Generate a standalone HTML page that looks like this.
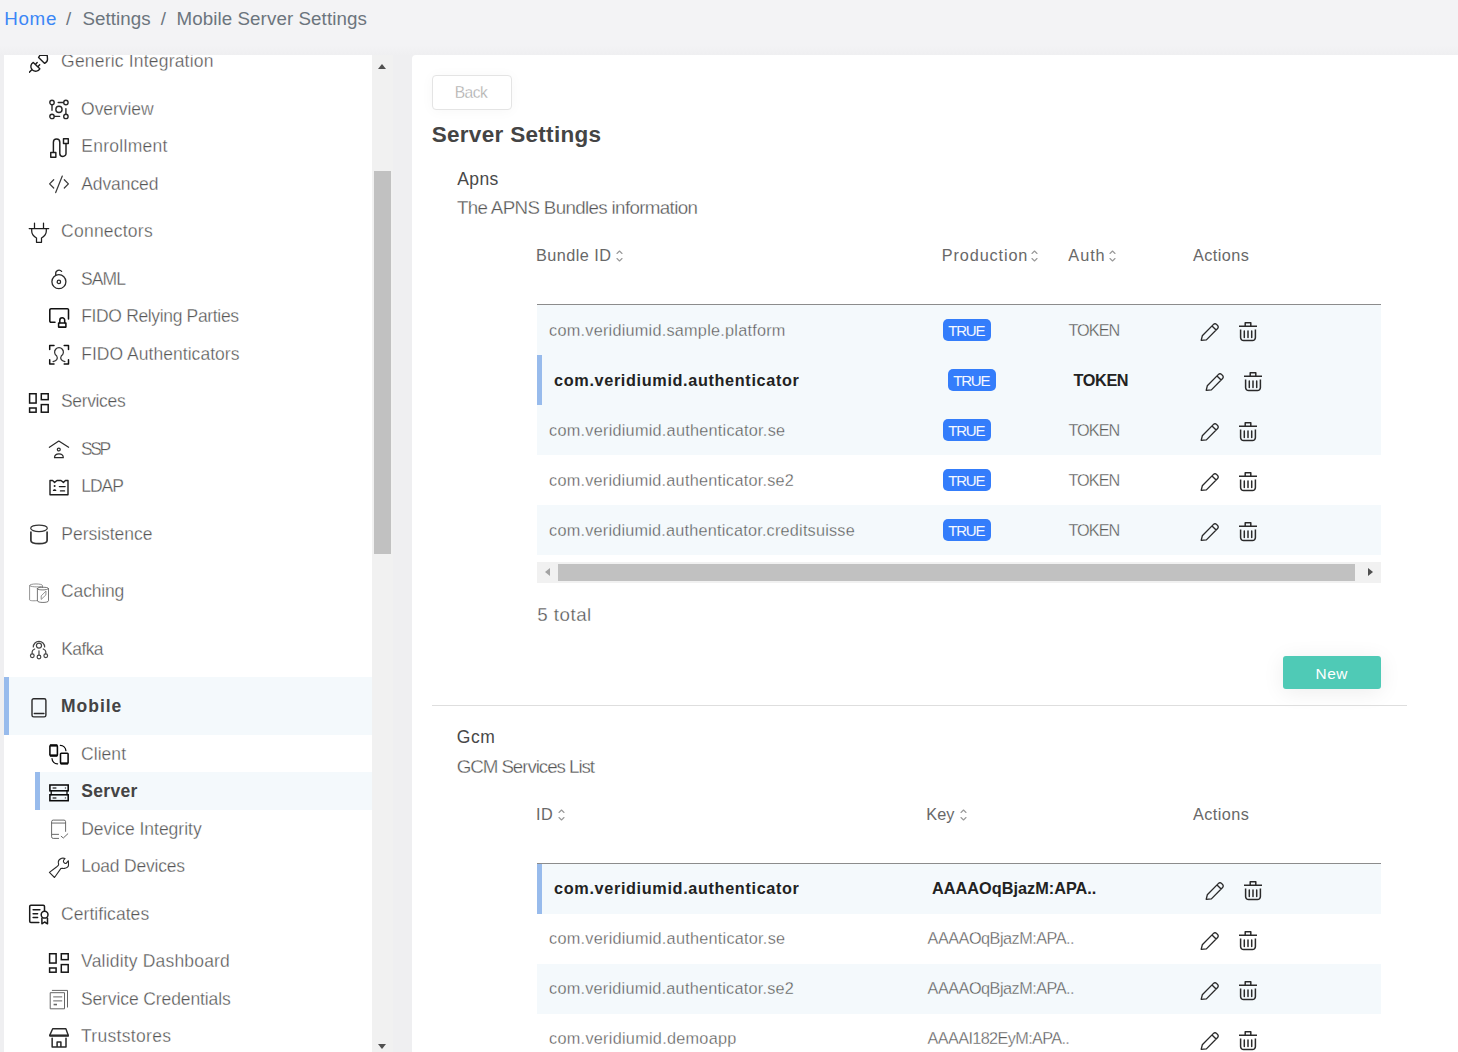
<!DOCTYPE html>
<html lang="en"><head><meta charset="utf-8"><title>Mobile Server Settings</title>
<style>
html,body{margin:0;padding:0}
body{position:relative;width:1458px;height:1052px;overflow:hidden;background:#f3f3f5;
 font-family:"Liberation Sans",sans-serif;font-kerning:normal;color:#555}
nav,aside,main,section,header{display:block;margin:0;padding:0}
.a{position:absolute}
.t{position:absolute;white-space:pre;line-height:1;margin:0;padding:0;font-weight:400;text-decoration:none;display:block}
.b{font-weight:700}
.l{-webkit-text-stroke:0.3px #fff}
.lh{-webkit-text-stroke-color:#f4f9fc}
.ic{position:absolute;overflow:visible}
#shade{left:0;top:46px;width:1458px;height:1006px;background:linear-gradient(#f3f3f5,#efeff1 9px)}
#side{left:4px;top:55px;width:368px;height:997px;background:#fff}
#vtrack{left:372px;top:55px;width:21px;height:997px;background:#f1f1f1}
#vthumb{left:374px;top:171px;width:17px;height:383px;background:#c1c1c1}
#panel{left:412px;top:55px;width:1046px;height:997px;background:#fff;border-top-left-radius:4px}
.hl{background:#f4f9fc}
.bar{background:#98bbec}
.row{left:537px;width:844px;height:50px}
.hline{left:537px;width:844px;height:1px;background:#8c8c8c}
.bdgbox{width:48px;height:22px;border-radius:5px;background:#347dfb}
#back{left:432px;top:75px;width:78px;height:33px;border:1px solid #e4e4e4;border-radius:4px;background:#fff;box-shadow:0 1px 14px rgba(0,0,0,.035)}
#new{left:1283px;top:656px;width:98px;height:33px;border-radius:3px;background:#4fcab6;box-shadow:0 3px 22px rgba(0,0,0,.075)}
#hr{left:432px;top:705px;width:975px;height:1px;background:#dedede}
#htrack{left:537px;top:562px;width:844px;height:21px;background:#f1f1f1}
#hthumb{left:558px;top:564px;width:797px;height:17px;background:#c1c1c1}
.tri{width:0;height:0;border-style:solid}
</style></head><body>
<div id="shade" class="a"></div><div id="side" class="a"></div><div id="vtrack" class="a"></div><div id="vthumb" class="a"></div>
<div class="a tri" style="left:378px;top:64px;border-width:0 4.75px 5px 4.75px;border-color:transparent transparent #505050 transparent"></div><div class="a tri" style="left:378px;top:1044px;border-width:5px 4.75px 0 4.75px;border-color:#505050 transparent transparent transparent"></div>
<div id="panel" class="a"></div>
<nav aria-label="breadcrumb">
<a class="t" style="left:4.16px;top:10.3px;font-size:18.75px;letter-spacing:0.719px;color:#3b86f6">Home</a>
<span class="t" style="left:66px;top:10.3px;font-size:18.75px;letter-spacing:0.000px;color:#6c757d">/</span>
<span class="t" style="left:82.55px;top:10.3px;font-size:18.75px;letter-spacing:0.040px;color:#6c757d">Settings</span>
<span class="t" style="left:160.8px;top:10.3px;font-size:18.75px;letter-spacing:0.000px;color:#6c757d">/</span>
<span class="t" style="left:176.46px;top:10.3px;font-size:18.75px;letter-spacing:0.085px;color:#6c757d">Mobile Server Settings</span>
</nav>
<aside>
<div class="a hl" style="left:4px;top:677px;width:368px;height:57.5px"></div><div class="a bar" style="left:4px;top:677px;width:5px;height:57.5px"></div><div class="a hl" style="left:35px;top:772px;width:337px;height:37.5px"></div><div class="a bar" style="left:35px;top:772px;width:5px;height:37.5px"></div>
<svg class="ic" style="clip-path:inset(2px 0 0 0);left:29px;top:53px" width="20" height="20" viewBox="0 0 20 20" fill="none" stroke="#1e1e1e" stroke-width="1.4" stroke-linecap="round" stroke-linejoin="round"><path d="M-0.1 19.7 L2.8 16.8"/><path d="M4.3 9.4 L10.8 15.8 C9.4 18.4 6 19 3.4 17 C0.8 14.6 1.6 11 4.3 9.4 Z"/><path d="M6.8 11.1 L8.2 9.6 M9.3 13.2 L10.7 11.7"/><path d="M9.6 4.4 L15.7 10.4 C17.6 9.4 18.6 8 18.5 6 L18.2 2.2 H11 Z"/></svg><a class="t l" style="clip-path:inset(2px 0 0 0);left:61.12px;top:53px;font-size:17.5px;letter-spacing:0.193px;color:#555">Generic Integration</a>
<svg class="ic" style="left:49px;top:100px" width="20" height="20" viewBox="0 0 20 20" fill="none" stroke="#2a2a2a" stroke-width="1.4" stroke-linecap="round" stroke-linejoin="round"><circle cx="3" cy="2.5" r="2.2"/><circle cx="16.9" cy="2.5" r="2.2"/><circle cx="3" cy="16.4" r="2.2"/><circle cx="16.9" cy="16.4" r="2.2"/><circle cx="9.95" cy="9.4" r="3.1"/><path d="M3 5 V10.2 M14.4 2.5 H9.2 M5.5 16.4 H10.6 M16.9 13.9 V8.6"/></svg><a class="t l" style="left:81.07px;top:100.5px;font-size:17.5px;letter-spacing:-0.049px;color:#555">Overview</a>
<svg class="ic" style="left:49px;top:138px" width="20" height="20" viewBox="0 0 20 20" fill="none" stroke="#1e1e1e" stroke-width="1.45" stroke-linecap="round" stroke-linejoin="round"><rect x="1.75" y="14.5" width="5.1" height="4.7"/><rect x="14.5" y="0.7" width="4.8" height="4.7"/><path d="M4.4 14.2 V4.2 a3.2 3.2 0 0 1 6.4 0 V15.4 a3.1 3.1 0 0 0 6.2 0 V6"/></svg><a class="t l" style="left:81.21px;top:138px;font-size:17.5px;letter-spacing:0.285px;color:#555">Enrollment</a>
<svg class="ic" style="left:49px;top:175px" width="20" height="20" viewBox="0 0 20 20" fill="none" stroke="#3a3a3a" stroke-width="1.25" stroke-linecap="round" stroke-linejoin="round"><path d="M4.7 4.7 L0.6 8.85 L4.7 13 M13.3 1.1 L6.7 17.6 M15.3 4.7 L19.4 8.85 L15.3 13"/></svg><a class="t l" style="left:81.17px;top:175.5px;font-size:17.5px;letter-spacing:-0.068px;color:#555">Advanced</a>
<svg class="ic" style="left:29px;top:223px" width="20" height="20" viewBox="0 0 20 20" fill="none" stroke="#1e1e1e" stroke-width="1.25" stroke-linecap="round" stroke-linejoin="round"><path d="M0.2 5.5 H19.7 M5.5 0 V5.5 M14.5 0 V5.5"/><path d="M2.7 5.6 V8 C2.7 11.8 5 13.6 7.5 15 V19.3 H12.5 V15 C15 13.6 17.3 11.8 17.3 8 V5.6"/></svg><a class="t l" style="left:61.11px;top:223px;font-size:17.5px;letter-spacing:0.226px;color:#555">Connectors</a>
<svg class="ic" style="left:49px;top:270px" width="20" height="20" viewBox="0 0 20 20" fill="none" stroke="#2a2a2a" stroke-width="1.3" stroke-linecap="round" stroke-linejoin="round"><circle cx="9.9" cy="11.7" r="7"/><circle cx="9.9" cy="11.9" r="1.7"/><path d="M6.7 5.4 V3.6 a3.3 3.3 0 0 1 5.9 -2.2"/></svg><a class="t l" style="left:80.91px;top:270.5px;font-size:17.5px;letter-spacing:-0.893px;color:#555">SAML</a>
<svg class="ic" style="left:49px;top:308px" width="20" height="20" viewBox="0 0 20 20" fill="none" stroke="#111" stroke-width="1.55" stroke-linecap="round" stroke-linejoin="round"><path d="M6 14.3 H2 a1.2 1.2 0 0 1 -1.2 -1.2 V1.9 a1.2 1.2 0 0 1 1.2 -1.2 H18.3 a1.2 1.2 0 0 1 1.2 1.2 V11"/><rect x="9.6" y="15" width="7.3" height="4.1"/><path d="M10.8 14.8 V12.2 a2.45 2.45 0 0 1 4.9 0 V14.8"/></svg><a class="t l" style="left:81.21px;top:308px;font-size:17.5px;letter-spacing:-0.344px;color:#555">FIDO Relying Parties</a>
<svg class="ic" style="left:49px;top:345px" width="20" height="20" viewBox="0 0 20 20" fill="none" stroke="#333" stroke-width="1.25" stroke-linecap="round" stroke-linejoin="round"><path d="M5 0.4 H0.7 V4.5 M15.2 0.4 H19.5 V4.5 M0.7 14.7 V18.9 H5 M19.5 14.7 V18.9 H15.2" stroke="#111" stroke-width="1.5"/><path d="M4.1 16.6 C7.2 15.6 9.6 14.2 7.6 10.8 A4.4 4.4 0 1 1 12.4 10.8 C10.4 14.2 12.8 15.6 15.9 16.6"/></svg><a class="t l" style="left:81.21px;top:345.5px;font-size:17.5px;letter-spacing:0.038px;color:#555">FIDO Authenticators</a>
<svg class="ic" style="left:29px;top:393px" width="20" height="20" viewBox="0 0 20 20" fill="none" stroke="#151515" stroke-width="1.5" stroke-linecap="round" stroke-linejoin="round"><g stroke-linejoin="miter"><rect x="0.6" y="0.75" width="6.5" height="9.3"/><rect x="12.3" y="0.75" width="6.9" height="5.9"/><rect x="0.6" y="15" width="6.5" height="4.2"/><rect x="12.3" y="11.6" width="6.9" height="7.6"/></g></svg><a class="t l" style="left:61.01px;top:393px;font-size:17.5px;letter-spacing:-0.354px;color:#555">Services</a>
<svg class="ic" style="left:49px;top:440px" width="20" height="20" viewBox="0 0 20 20" fill="none" stroke="#2a2a2a" stroke-width="1.2" stroke-linecap="round" stroke-linejoin="round"><path d="M0.4 7.3 L9.8 1 L19.6 7.3"/><circle cx="9.8" cy="9.5" r="1.45"/><path d="M5.5 17.7 H14.3 C14.3 15 12 13.8 9.9 13.8 C7.8 13.8 5.5 15 5.5 17.7 Z"/></svg><a class="t l" style="left:80.91px;top:440.5px;font-size:17.5px;letter-spacing:-2.400px;color:#555">SSP</a>
<svg class="ic" style="left:49px;top:478px" width="20" height="20" viewBox="0 0 20 20" fill="none" stroke="#1e1e1e" stroke-width="1.4" stroke-linecap="round" stroke-linejoin="round"><path d="M1 2.5 H3.6 L5.6 4.4 L8 2.5 H12 L14.4 4.4 L16.4 2.5 H19 V16.8 H1 Z"/><path d="M10.4 8.6 H16.1 M11.5 12.9 H15.5"/><circle cx="5.6" cy="8" r="1" fill="#1e1e1e" stroke="none"/><path d="M3.8 13 C3.8 10.8 7.4 10.8 7.4 13 Z" fill="#1e1e1e" stroke="none"/></svg><a class="t l" style="left:81.21px;top:478px;font-size:17.5px;letter-spacing:-1.036px;color:#555">LDAP</a>
<svg class="ic" style="left:29px;top:525px" width="20" height="20" viewBox="0 0 20 20" fill="none" stroke="#333" stroke-width="1.4" stroke-linecap="round" stroke-linejoin="round"><ellipse cx="10" cy="3.25" rx="8.3" ry="3.25" stroke-width="1.25"/><path d="M1.9 7 V15.5 C1.9 17.4 5.5 18.7 10 18.7 C14.5 18.7 18.1 17.4 18.1 15.5 V7" stroke-width="1.7"/></svg><a class="t l" style="left:61.31px;top:525.5px;font-size:17.5px;letter-spacing:-0.027px;color:#555">Persistence</a>
<svg class="ic" style="left:29px;top:583px" width="20" height="20" viewBox="0 0 20 20" fill="none" stroke="#777" stroke-width="0.8" stroke-linecap="round" stroke-linejoin="round"><path d="M8.4 17.6 C6 17.9 0.6 18 0.6 16.8 V2.6 C0.6 0.4 13.5 0.4 13.5 2.6 V4.4"/><path d="M0.6 2.6 C0.6 4 9 4.2 12.2 3.6"/><path d="M8.4 5.6 V17.8 C8.4 20 19.5 20 19.5 17.8 V5.6 C19.5 3.8 8.4 3.8 8.4 5.6 C8.4 7.4 19.5 7.4 19.5 5.6" stroke="#555"/><path d="M16.7 8.4 L12.2 12.9 L12.2 16.4 L16.6 12.2 Z"/></svg><a class="t l" style="left:61.11px;top:583px;font-size:17.5px;letter-spacing:-0.165px;color:#555">Caching</a>
<svg class="ic" style="left:29px;top:640px" width="20" height="20" viewBox="0 0 20 20" fill="none" stroke="#444" stroke-width="1.2" stroke-linecap="round" stroke-linejoin="round"><path d="M4.3 7 A5.65 5.65 0 1 1 15.65 7"/><circle cx="9.97" cy="5.6" r="2.55"/><circle cx="3.3" cy="15.75" r="1.85"/><circle cx="9.97" cy="17" r="1.85"/><circle cx="16.75" cy="15.75" r="1.85"/><path d="M5.7 9 C4 9.8 3.15 10.6 3.15 11.8 V13.6 M14.25 9 C15.9 9.8 16.8 10.6 16.8 11.8 V13.6 M9.97 10.8 V14.8"/></svg><a class="t l" style="left:61.31px;top:640.5px;font-size:17.5px;letter-spacing:-0.641px;color:#555">Kafka</a>
<svg class="ic" style="left:29px;top:698px" width="20" height="20" viewBox="0 0 20 20" fill="none" stroke="#2a2a2a" stroke-width="1.4" stroke-linecap="round" stroke-linejoin="round"><rect x="3" y="0.8" width="13.9" height="18.1" rx="1.7"/><path d="M5.3 15.45 H14.9"/></svg><a class="t b" style="left:61.03px;top:698px;font-size:17.5px;letter-spacing:0.971px;color:#444">Mobile</a>
<svg class="ic" style="left:49px;top:745px" width="20" height="20" viewBox="0 0 20 20" fill="none" stroke="#0a0a0a" stroke-width="1.55" stroke-linecap="round" stroke-linejoin="round"><rect x="0.9" y="0.6" width="7.5" height="9.9" rx="0.8"/><path d="M0.9 0.3 H8.4 M0.9 10.6 H8.4" stroke-width="2.1" stroke-linecap="butt"/><rect x="11.5" y="8.2" width="7.6" height="10.2" rx="0.8"/><path d="M11.5 18.5 H19.1" stroke-width="2.1" stroke-linecap="butt"/><path d="M11.3 0.3 A5.6 5.6 0 0 1 16.9 5.6 M3 13.6 A5.3 5.3 0 0 0 8.6 18.8" stroke-width="1.2"/></svg><a class="t l" style="left:81.01px;top:745.5px;font-size:17.5px;letter-spacing:0.055px;color:#555">Client</a>
<svg class="ic" style="left:49px;top:783px" width="20" height="20" viewBox="0 0 20 20" fill="none" stroke="#0a0a0a" stroke-width="1.55" stroke-linecap="round" stroke-linejoin="round"><g stroke-linejoin="miter"><rect x="0.9" y="2" width="18.3" height="5.8"/><rect x="0.9" y="11.8" width="18.3" height="5.9"/></g><path d="M2.2 8 V11.6 M18 8 V11.6" stroke-width="1.3"/><path d="M3.6 5 H7.4 M3.6 14.9 H7.4" stroke="#444" stroke-width="1.5" stroke-linecap="butt"/><circle cx="16.4" cy="5" r="0.7" fill="#444" stroke="none"/><circle cx="16.4" cy="14.9" r="0.7" fill="#444" stroke="none"/></svg><a class="t b" style="left:81.3px;top:783px;font-size:17.5px;letter-spacing:0.296px;color:#444">Server</a>
<svg class="ic" style="left:49px;top:820px" width="20" height="20" viewBox="0 0 20 20" fill="none" stroke="#6a6a6a" stroke-width="1.0" stroke-linecap="round" stroke-linejoin="round"><path d="M9.6 18.4 H4.2 a1.6 1.6 0 0 1 -1.6 -1.6 V1.7 a1.6 1.6 0 0 1 1.6 -1.6 H15 a1.6 1.6 0 0 1 1.6 1.6 V11.4"/><path d="M2.6 3.05 H16.6 M3.2 14.35 H9.6"/><path d="M12.2 16.3 L14.3 18 L18.8 13.8"/></svg><a class="t l" style="left:81.21px;top:820.5px;font-size:17.5px;letter-spacing:-0.012px;color:#555">Device Integrity</a>
<svg class="ic" style="left:49px;top:858px" width="20" height="20" viewBox="0 0 20 20" fill="none" stroke="#2a2a2a" stroke-width="1.1" stroke-linecap="round" stroke-linejoin="round"><path d="M0.4 14.4 L5.5 19.5 L11.8 10.6 C13 10 14 10.7 15.5 10.4 C17.5 10 19.5 8.5 19.5 7 L19.4 2.7 L17.2 5.3 C16.5 5.8 15 5.3 14.4 3.6 C14.2 2.8 15 1.5 16 0.6 C15 0.1 13.5 0.1 12.7 0.3 C10.8 1 9.3 2.8 9.3 4.1 C9.2 5.3 10 6.2 9.5 7 C9 8 8.2 8.5 7.5 9 Z"/></svg><a class="t l" style="left:81.21px;top:858px;font-size:17.5px;letter-spacing:-0.201px;color:#555">Load Devices</a>
<svg class="ic" style="left:29px;top:905px" width="20" height="20" viewBox="0 0 20 20" fill="none" stroke="#1a1a1a" stroke-width="1.5" stroke-linecap="round" stroke-linejoin="round"><path d="M9.8 17.5 H1.9 a1.2 1.2 0 0 1 -1.2 -1.2 V1.4 a1.2 1.2 0 0 1 1.2 -1.2 H14.3 a1.2 1.2 0 0 1 1.2 1.2 V5.9"/><path d="M4.1 4.8 H10.9 M4.1 8.8 H8.6 M4.1 12.6 H8.6"/><circle cx="15.6" cy="9.7" r="3.4"/><path d="M12.9 13.3 V18.8 L15.6 17 L18.5 18.8 V13.3"/></svg><a class="t l" style="left:61.11px;top:905.5px;font-size:17.5px;letter-spacing:0.045px;color:#555">Certificates</a>
<svg class="ic" style="left:49px;top:953px" width="20" height="20" viewBox="0 0 20 20" fill="none" stroke="#151515" stroke-width="1.5" stroke-linecap="round" stroke-linejoin="round"><g stroke-linejoin="miter"><rect x="0.6" y="0.75" width="6.5" height="9.3"/><rect x="12.3" y="0.75" width="6.9" height="5.9"/><rect x="0.6" y="15" width="6.5" height="4.2"/><rect x="12.3" y="11.6" width="6.9" height="7.6"/></g></svg><a class="t l" style="left:81.12px;top:953px;font-size:17.5px;letter-spacing:0.183px;color:#555">Validity Dashboard</a>
<svg class="ic" style="left:49px;top:990px" width="20" height="20" viewBox="0 0 20 20" fill="none" stroke="#666" stroke-width="1.0" stroke-linecap="round" stroke-linejoin="round"><rect x="1.6" y="2.7" width="13.9" height="16.1"/><path d="M3.3 0.4 H18.5 V17.1"/><path d="M4.6 6.9 H12.8 M4.6 10.9 H12.8"/><path d="M4.6 14.55 H8" stroke-width="1.6" stroke-linecap="butt"/></svg><a class="t l" style="left:80.91px;top:990.5px;font-size:17.5px;letter-spacing:-0.106px;color:#555">Service Credentials</a>
<svg class="ic" style="left:49px;top:1028px" width="20" height="20" viewBox="0 0 20 20" fill="none" stroke="#2a2a2a" stroke-width="1.5" stroke-linecap="round" stroke-linejoin="round"><path d="M3.7 0.7 H16.9 L19.3 7.4 H0.7 Z" stroke-width="1.4"/><path d="M0.4 7.7 H19.8" stroke-width="2.2" stroke-linecap="butt"/><path d="M3.15 10.2 V19 H17 V10.2 M8.1 19 V14.1 H11.9 V19"/></svg><a class="t l" style="left:81.01px;top:1028px;font-size:17.5px;letter-spacing:0.306px;color:#555">Truststores</a>
</aside>
<main>
<div id="back" class="a"></div><div id="new" class="a"></div><div id="hr" class="a"></div>
<div class="a row hl" style="top:305px"></div><div class="a row hl" style="top:355px"></div><div class="a row hl" style="top:405px"></div><div class="a row hl" style="top:505px"></div><div class="a bar" style="left:537px;top:355px;width:5px;height:50px"></div><div class="a hline" style="top:304px"></div>
<div class="a row hl" style="top:864px"></div><div class="a row hl" style="top:964px"></div><div class="a bar" style="left:537px;top:864px;width:5px;height:50px"></div><div class="a hline" style="top:863px"></div>
<div class="a bdgbox" style="left:943px;top:319px"></div><div class="a bdgbox" style="left:948px;top:369px"></div><div class="a bdgbox" style="left:943px;top:419px"></div><div class="a bdgbox" style="left:943px;top:469px"></div><div class="a bdgbox" style="left:943px;top:519px"></div>
<svg class="ic" style="left:1199.5px;top:320.5px" width="20" height="20" viewBox="0 0 20 20" fill="none" stroke="#2a2a2a" stroke-width="1.35" stroke-linejoin="round" stroke-linecap="round"><path d="M2.3 14.8 L13.5 3.4 a2.1 2.1 0 0 1 3 0 L17.6 4.5 a2.1 2.1 0 0 1 0 3 L6.4 18.9 L1.2 19.3 Z M12 4.9 L16.1 9"/></svg><svg class="ic" style="left:1238.2px;top:320.5px" width="20" height="20" viewBox="0 0 20 20" fill="none" stroke="#2a2a2a" stroke-width="1.5" stroke-linecap="butt" stroke-linejoin="round"><path d="M1 5.2 H19 M7.2 5 V1.8 H12.8 V5 M2.6 8.4 V16.6 a3 3 0 0 0 3 3 H14.4 a3 3 0 0 0 3 -3 V8.4"/><path d="M6.3 10 V16.4 M10 10 V16.4 M13.7 10 V16.4" stroke-linecap="round"/></svg><svg class="ic" style="left:1204.5px;top:370.5px" width="20" height="20" viewBox="0 0 20 20" fill="none" stroke="#2a2a2a" stroke-width="1.35" stroke-linejoin="round" stroke-linecap="round"><path d="M2.3 14.8 L13.5 3.4 a2.1 2.1 0 0 1 3 0 L17.6 4.5 a2.1 2.1 0 0 1 0 3 L6.4 18.9 L1.2 19.3 Z M12 4.9 L16.1 9"/></svg><svg class="ic" style="left:1243.2px;top:370.5px" width="20" height="20" viewBox="0 0 20 20" fill="none" stroke="#2a2a2a" stroke-width="1.5" stroke-linecap="butt" stroke-linejoin="round"><path d="M1 5.2 H19 M7.2 5 V1.8 H12.8 V5 M2.6 8.4 V16.6 a3 3 0 0 0 3 3 H14.4 a3 3 0 0 0 3 -3 V8.4"/><path d="M6.3 10 V16.4 M10 10 V16.4 M13.7 10 V16.4" stroke-linecap="round"/></svg><svg class="ic" style="left:1199.5px;top:420.5px" width="20" height="20" viewBox="0 0 20 20" fill="none" stroke="#2a2a2a" stroke-width="1.35" stroke-linejoin="round" stroke-linecap="round"><path d="M2.3 14.8 L13.5 3.4 a2.1 2.1 0 0 1 3 0 L17.6 4.5 a2.1 2.1 0 0 1 0 3 L6.4 18.9 L1.2 19.3 Z M12 4.9 L16.1 9"/></svg><svg class="ic" style="left:1238.2px;top:420.5px" width="20" height="20" viewBox="0 0 20 20" fill="none" stroke="#2a2a2a" stroke-width="1.5" stroke-linecap="butt" stroke-linejoin="round"><path d="M1 5.2 H19 M7.2 5 V1.8 H12.8 V5 M2.6 8.4 V16.6 a3 3 0 0 0 3 3 H14.4 a3 3 0 0 0 3 -3 V8.4"/><path d="M6.3 10 V16.4 M10 10 V16.4 M13.7 10 V16.4" stroke-linecap="round"/></svg><svg class="ic" style="left:1199.5px;top:470.5px" width="20" height="20" viewBox="0 0 20 20" fill="none" stroke="#2a2a2a" stroke-width="1.35" stroke-linejoin="round" stroke-linecap="round"><path d="M2.3 14.8 L13.5 3.4 a2.1 2.1 0 0 1 3 0 L17.6 4.5 a2.1 2.1 0 0 1 0 3 L6.4 18.9 L1.2 19.3 Z M12 4.9 L16.1 9"/></svg><svg class="ic" style="left:1238.2px;top:470.5px" width="20" height="20" viewBox="0 0 20 20" fill="none" stroke="#2a2a2a" stroke-width="1.5" stroke-linecap="butt" stroke-linejoin="round"><path d="M1 5.2 H19 M7.2 5 V1.8 H12.8 V5 M2.6 8.4 V16.6 a3 3 0 0 0 3 3 H14.4 a3 3 0 0 0 3 -3 V8.4"/><path d="M6.3 10 V16.4 M10 10 V16.4 M13.7 10 V16.4" stroke-linecap="round"/></svg><svg class="ic" style="left:1199.5px;top:520.5px" width="20" height="20" viewBox="0 0 20 20" fill="none" stroke="#2a2a2a" stroke-width="1.35" stroke-linejoin="round" stroke-linecap="round"><path d="M2.3 14.8 L13.5 3.4 a2.1 2.1 0 0 1 3 0 L17.6 4.5 a2.1 2.1 0 0 1 0 3 L6.4 18.9 L1.2 19.3 Z M12 4.9 L16.1 9"/></svg><svg class="ic" style="left:1238.2px;top:520.5px" width="20" height="20" viewBox="0 0 20 20" fill="none" stroke="#2a2a2a" stroke-width="1.5" stroke-linecap="butt" stroke-linejoin="round"><path d="M1 5.2 H19 M7.2 5 V1.8 H12.8 V5 M2.6 8.4 V16.6 a3 3 0 0 0 3 3 H14.4 a3 3 0 0 0 3 -3 V8.4"/><path d="M6.3 10 V16.4 M10 10 V16.4 M13.7 10 V16.4" stroke-linecap="round"/></svg>
<svg class="ic" style="left:1204.5px;top:879.5px" width="20" height="20" viewBox="0 0 20 20" fill="none" stroke="#2a2a2a" stroke-width="1.35" stroke-linejoin="round" stroke-linecap="round"><path d="M2.3 14.8 L13.5 3.4 a2.1 2.1 0 0 1 3 0 L17.6 4.5 a2.1 2.1 0 0 1 0 3 L6.4 18.9 L1.2 19.3 Z M12 4.9 L16.1 9"/></svg><svg class="ic" style="left:1243.2px;top:879.5px" width="20" height="20" viewBox="0 0 20 20" fill="none" stroke="#2a2a2a" stroke-width="1.5" stroke-linecap="butt" stroke-linejoin="round"><path d="M1 5.2 H19 M7.2 5 V1.8 H12.8 V5 M2.6 8.4 V16.6 a3 3 0 0 0 3 3 H14.4 a3 3 0 0 0 3 -3 V8.4"/><path d="M6.3 10 V16.4 M10 10 V16.4 M13.7 10 V16.4" stroke-linecap="round"/></svg><svg class="ic" style="left:1199.5px;top:929.5px" width="20" height="20" viewBox="0 0 20 20" fill="none" stroke="#2a2a2a" stroke-width="1.35" stroke-linejoin="round" stroke-linecap="round"><path d="M2.3 14.8 L13.5 3.4 a2.1 2.1 0 0 1 3 0 L17.6 4.5 a2.1 2.1 0 0 1 0 3 L6.4 18.9 L1.2 19.3 Z M12 4.9 L16.1 9"/></svg><svg class="ic" style="left:1238.2px;top:929.5px" width="20" height="20" viewBox="0 0 20 20" fill="none" stroke="#2a2a2a" stroke-width="1.5" stroke-linecap="butt" stroke-linejoin="round"><path d="M1 5.2 H19 M7.2 5 V1.8 H12.8 V5 M2.6 8.4 V16.6 a3 3 0 0 0 3 3 H14.4 a3 3 0 0 0 3 -3 V8.4"/><path d="M6.3 10 V16.4 M10 10 V16.4 M13.7 10 V16.4" stroke-linecap="round"/></svg><svg class="ic" style="left:1199.5px;top:979.5px" width="20" height="20" viewBox="0 0 20 20" fill="none" stroke="#2a2a2a" stroke-width="1.35" stroke-linejoin="round" stroke-linecap="round"><path d="M2.3 14.8 L13.5 3.4 a2.1 2.1 0 0 1 3 0 L17.6 4.5 a2.1 2.1 0 0 1 0 3 L6.4 18.9 L1.2 19.3 Z M12 4.9 L16.1 9"/></svg><svg class="ic" style="left:1238.2px;top:979.5px" width="20" height="20" viewBox="0 0 20 20" fill="none" stroke="#2a2a2a" stroke-width="1.5" stroke-linecap="butt" stroke-linejoin="round"><path d="M1 5.2 H19 M7.2 5 V1.8 H12.8 V5 M2.6 8.4 V16.6 a3 3 0 0 0 3 3 H14.4 a3 3 0 0 0 3 -3 V8.4"/><path d="M6.3 10 V16.4 M10 10 V16.4 M13.7 10 V16.4" stroke-linecap="round"/></svg><svg class="ic" style="left:1199.5px;top:1029.5px" width="20" height="20" viewBox="0 0 20 20" fill="none" stroke="#2a2a2a" stroke-width="1.35" stroke-linejoin="round" stroke-linecap="round"><path d="M2.3 14.8 L13.5 3.4 a2.1 2.1 0 0 1 3 0 L17.6 4.5 a2.1 2.1 0 0 1 0 3 L6.4 18.9 L1.2 19.3 Z M12 4.9 L16.1 9"/></svg><svg class="ic" style="left:1238.2px;top:1029.5px" width="20" height="20" viewBox="0 0 20 20" fill="none" stroke="#2a2a2a" stroke-width="1.5" stroke-linecap="butt" stroke-linejoin="round"><path d="M1 5.2 H19 M7.2 5 V1.8 H12.8 V5 M2.6 8.4 V16.6 a3 3 0 0 0 3 3 H14.4 a3 3 0 0 0 3 -3 V8.4"/><path d="M6.3 10 V16.4 M10 10 V16.4 M13.7 10 V16.4" stroke-linecap="round"/></svg>
<svg class="ic" style="left:615.6px;top:250px" width="8" height="12" viewBox="0 0 8 12" fill="none" stroke="#999" stroke-width="1.1" stroke-linecap="round" stroke-linejoin="round"><path d="M1 3.5 L3.5 1 L6 3.5 M1 8.5 L3.5 11 L6 8.5"/></svg><svg class="ic" style="left:1031.4px;top:250px" width="8" height="12" viewBox="0 0 8 12" fill="none" stroke="#999" stroke-width="1.1" stroke-linecap="round" stroke-linejoin="round"><path d="M1 3.5 L3.5 1 L6 3.5 M1 8.5 L3.5 11 L6 8.5"/></svg><svg class="ic" style="left:1108.6px;top:250px" width="8" height="12" viewBox="0 0 8 12" fill="none" stroke="#999" stroke-width="1.1" stroke-linecap="round" stroke-linejoin="round"><path d="M1 3.5 L3.5 1 L6 3.5 M1 8.5 L3.5 11 L6 8.5"/></svg><svg class="ic" style="left:557.9px;top:809px" width="8" height="12" viewBox="0 0 8 12" fill="none" stroke="#999" stroke-width="1.1" stroke-linecap="round" stroke-linejoin="round"><path d="M1 3.5 L3.5 1 L6 3.5 M1 8.5 L3.5 11 L6 8.5"/></svg><svg class="ic" style="left:959.9px;top:809px" width="8" height="12" viewBox="0 0 8 12" fill="none" stroke="#999" stroke-width="1.1" stroke-linecap="round" stroke-linejoin="round"><path d="M1 3.5 L3.5 1 L6 3.5 M1 8.5 L3.5 11 L6 8.5"/></svg>
<div id="htrack" class="a"></div><div id="hthumb" class="a"></div><div class="a tri" style="left:545px;top:568px;border-width:4.5px 5px 4.5px 0;border-color:transparent #a3a3a3 transparent transparent"></div><div class="a tri" style="left:1368px;top:568px;border-width:4.5px 0 4.5px 5px;border-color:transparent transparent transparent #505050"></div>
<span class="t l" style="left:454.72px;top:85px;font-size:15.6px;letter-spacing:-0.508px;color:#a8a8a8">Back</span>
<h2 class="t b" style="left:431.65px;top:123.8px;font-size:22.5px;letter-spacing:0.314px;color:#444">Server Settings</h2>
<h4 class="t" style="left:457.27px;top:170.5px;font-size:17.5px;letter-spacing:0.360px;color:#484848">Apns</h4>
<p class="t l" style="left:456.88px;top:198.8px;font-size:18.75px;letter-spacing:-0.647px;color:#555">The APNS Bundles information</p>
<span class="t" style="left:536.07px;top:247px;font-size:16.25px;letter-spacing:0.443px;color:#686868">Bundle ID</span>
<span class="t" style="left:941.87px;top:247px;font-size:16.25px;letter-spacing:0.867px;color:#686868">Production</span>
<span class="t" style="left:1068.37px;top:247px;font-size:16.25px;letter-spacing:0.953px;color:#686868">Auth</span>
<span class="t" style="left:1193.07px;top:247px;font-size:16.25px;letter-spacing:0.422px;color:#686868">Actions</span>
<span class="t l lh" style="left:549.11px;top:322px;font-size:16.25px;letter-spacing:0.237px;color:#595959">com.veridiumid.sample.platform</span>
<span class="t" style="left:948.26px;top:323px;font-size:15px;letter-spacing:-1.217px;color:#f4f8ff">TRUE</span>
<span class="t l lh" style="left:1068.44px;top:322px;font-size:16.25px;letter-spacing:-0.974px;color:#595959">TOKEN</span>
<span class="t b" style="left:554.07px;top:372px;font-size:16.25px;letter-spacing:0.639px;color:#222">com.veridiumid.authenticator</span>
<span class="t" style="left:953.26px;top:373px;font-size:15px;letter-spacing:-1.217px;color:#f4f8ff">TRUE</span>
<span class="t b" style="left:1073.52px;top:372px;font-size:16.25px;letter-spacing:-0.376px;color:#222">TOKEN</span>
<span class="t l lh" style="left:549.11px;top:422px;font-size:16.25px;letter-spacing:0.247px;color:#595959">com.veridiumid.authenticator.se</span>
<span class="t" style="left:948.26px;top:423px;font-size:15px;letter-spacing:-1.217px;color:#f4f8ff">TRUE</span>
<span class="t l lh" style="left:1068.44px;top:422px;font-size:16.25px;letter-spacing:-0.974px;color:#595959">TOKEN</span>
<span class="t l" style="left:549.11px;top:472px;font-size:16.25px;letter-spacing:0.231px;color:#595959">com.veridiumid.authenticator.se2</span>
<span class="t" style="left:948.26px;top:473px;font-size:15px;letter-spacing:-1.217px;color:#f4f8ff">TRUE</span>
<span class="t l" style="left:1068.44px;top:472px;font-size:16.25px;letter-spacing:-0.974px;color:#595959">TOKEN</span>
<span class="t l lh" style="left:549.11px;top:522px;font-size:16.25px;letter-spacing:0.212px;color:#595959">com.veridiumid.authenticator.creditsuisse</span>
<span class="t" style="left:948.26px;top:523px;font-size:15px;letter-spacing:-1.217px;color:#f4f8ff">TRUE</span>
<span class="t l lh" style="left:1068.44px;top:522px;font-size:16.25px;letter-spacing:-0.974px;color:#595959">TOKEN</span>
<p class="t l" style="left:537.15px;top:606px;font-size:18.75px;letter-spacing:0.505px;color:#555">5 total</p>
<span class="t" style="left:1315.54px;top:666px;font-size:15.4px;letter-spacing:0.509px;color:#fff">New</span>
<h4 class="t" style="left:456.72px;top:728.6px;font-size:17.5px;letter-spacing:0.647px;color:#484848">Gcm</h4>
<p class="t l" style="left:456.66px;top:758px;font-size:18.75px;letter-spacing:-1.054px;color:#555">GCM Services List</p>
<span class="t" style="left:535.9px;top:806px;font-size:16.25px;letter-spacing:0.627px;color:#686868">ID</span>
<span class="t" style="left:926.27px;top:806px;font-size:16.25px;letter-spacing:0.032px;color:#686868">Key</span>
<span class="t" style="left:1193.07px;top:806px;font-size:16.25px;letter-spacing:0.422px;color:#686868">Actions</span>
<span class="t b" style="left:554.07px;top:880px;font-size:16.25px;letter-spacing:0.642px;color:#222">com.veridiumid.authenticator</span>
<span class="t b" style="left:932.1px;top:880px;font-size:16.25px;letter-spacing:0.014px;color:#222">AAAAOqBjazM:APA..</span>
<span class="t l" style="left:549.11px;top:930px;font-size:16.25px;letter-spacing:0.247px;color:#595959">com.veridiumid.authenticator.se</span>
<span class="t l" style="left:927.57px;top:930px;font-size:16.25px;letter-spacing:-0.507px;color:#595959">AAAAOqBjazM:APA..</span>
<span class="t l lh" style="left:549.11px;top:980px;font-size:16.25px;letter-spacing:0.231px;color:#595959">com.veridiumid.authenticator.se2</span>
<span class="t l lh" style="left:927.57px;top:980px;font-size:16.25px;letter-spacing:-0.507px;color:#595959">AAAAOqBjazM:APA..</span>
<span class="t l" style="left:549.11px;top:1030px;font-size:16.25px;letter-spacing:0.268px;color:#595959">com.veridiumid.demoapp</span>
<span class="t l" style="left:927.57px;top:1030px;font-size:16.25px;letter-spacing:-0.626px;color:#595959">AAAAI182EyM:APA..</span>
</main>
</body></html>
